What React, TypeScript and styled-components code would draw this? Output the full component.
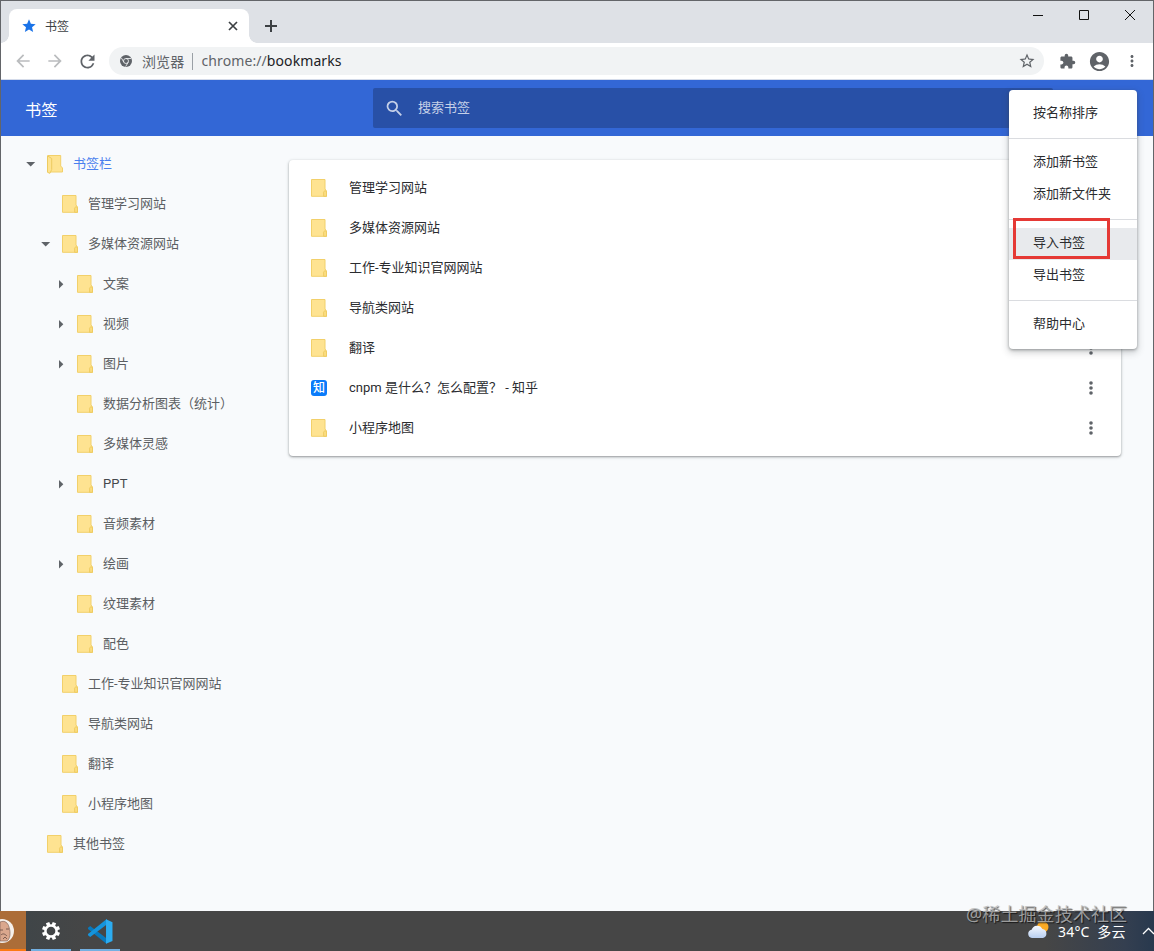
import React from "react";
import styled, { createGlobalStyle } from "styled-components";
import {
  MdAccountCircle,
  MdArrowBack,
  MdArrowForward,
  MdExtension,
  MdMoreVert,
  MdRefresh,
  MdSearch,
  MdStar,
  MdStarBorder,
} from "react-icons/md";

const GlobalStyle = createGlobalStyle`
  * { box-sizing: border-box; }
  html, body { margin: 0; padding: 0; overflow: hidden; }
  body { font-family: Roboto, "Noto Sans CJK SC", sans-serif; font-size: 13px; }
  svg { display: block; flex: none; }
`;

const Desktop = styled.div`
  position: relative;
  width: 1154px;
  height: 951px;
  display: flex;
  flex-direction: column;
  overflow: hidden;
`;

const BrowserWindow = styled.div`
  height: 911px;
  display: flex;
  flex-direction: column;
  border: 1px solid #636569;
  border-bottom: 0;
  background: #f8fafc;
`;

const TabStrip = styled.div`
  height: 42px;
  flex: none;
  display: flex;
  align-items: flex-end;
  padding-left: 8px;
  background: #dee1e6;
`;

const Tab = styled.div`
  position: relative;
  width: 240px;
  height: 34px;
  display: flex;
  align-items: center;
  padding: 0 10px 0 12px;
  border-radius: 8px 8px 0 0;
  background: #fff;
  color: #3c4043;
  font-size: 12px;
  &::before, &::after {
    content: "";
    position: absolute;
    bottom: 0;
    width: 8px;
    height: 8px;
  }
  &::before { left: -8px; background: radial-gradient(circle at 0 0, transparent 7.5px, #fff 8px); }
  &::after { right: -8px; background: radial-gradient(circle at 100% 0, transparent 7.5px, #fff 8px); }
`;

const TabTitle = styled.span`
  flex: 1;
  margin-left: 8px;
  padding-top: 1px;
  line-height: 18px;
`;

const NewTab = styled.div`
  display: flex;
  margin-left: 14px;
  padding-bottom: 9px;
`;

const WindowButtons = styled.div`
  margin-left: auto;
  height: 42px;
  display: flex;
  padding: 8px 17px 0 0;
  gap: 34px;
`;

const Toolbar = styled.div`
  height: 37px;
  flex: none;
  display: flex;
  align-items: center;
  padding: 0 12px;
  background: #fff;
  border-bottom: 1px solid #d4dbea;
  color: #5f6368;
`;

const NavIcons = styled.div`
  display: flex;
  align-items: center;
  width: 96px;
  gap: 12px;
`;

const AddressBar = styled.div`
  width: 936px;
  height: 28px;
  display: flex;
  align-items: center;
  padding: 0 8px 0 11px;
  border-radius: 14px;
  background: #f1f3f4;
  font-family: "Noto Sans", "Noto Sans CJK SC", sans-serif;
  font-size: 14px;
`;

const SiteName = styled.span`
  margin-left: 10px;
  padding-right: 7px;
  border-right: 1px solid #9aa0a6;
  line-height: 17px;
  letter-spacing: 0.2px;
`;

const Url = styled.span`
  flex: 1;
  margin-left: 9px;
  line-height: 20px;
  letter-spacing: 0.09px;
  b { font-weight: 400; color: #202124; }
`;

const ToolbarActions = styled.div`
  display: flex;
  align-items: center;
  margin-left: 15px;
  gap: 12px;
`;

const AppHeader = styled.header`
  position: relative;
  height: 56px;
  flex: none;
  display: flex;
  align-items: center;
  padding-left: 24px;
  background: #3367d6;
  color: #fff;
`;

const AppTitle = styled.h1`
  width: 348px;
  margin: 0;
  padding-top: 2px;
  font-size: 16.25px;
  font-weight: 400;
`;

const SearchBox = styled.div`
  width: 680px;
  height: 40px;
  display: flex;
  align-items: center;
  padding-left: 11px;
  gap: 13px;
  border-radius: 2px;
  background: #2850a7;
  color: #c5d0e8;
  line-height: 18px;
  span { padding-bottom: 1px; }
`;

const Menu = styled.div`
  position: absolute;
  z-index: 2;
  top: 10px;
  left: 1008px;
  width: 128px;
  padding: 8px 0;
  border-radius: 4px;
  background: #fff;
  color: #2b2c2f;
  box-shadow: 0 1px 3px rgba(60, 64, 67, 0.45), 0 3px 7px 1px rgba(60, 64, 67, 0.22);
`;

const MenuItem = styled.div<{ $active?: boolean }>`
  height: 32px;
  padding-left: 24px;
  line-height: 29px;
  white-space: nowrap;
  background: ${(p) => (p.$active ? "#e8eaed" : "transparent")};
`;

const MenuDivider = styled.div`
  height: 1px;
  margin: 8px 0;
  background: #dadce0;
`;

const Highlight = styled.div`
  position: absolute;
  top: 128px;
  left: 4px;
  width: 97px;
  height: 41px;
  border: 3px solid #e53935;
`;

const Main = styled.div`
  flex: 1;
  display: flex;
  min-height: 0;
`;

const Sidebar = styled.nav`
  width: 288px;
  padding-top: 8px;
`;

const TreeRow = styled.div<{ $level: number; $selected?: boolean }>`
  height: 40px;
  display: flex;
  align-items: center;
  padding-left: ${(p) => 23 + p.$level * 15}px;
  color: ${(p) => (p.$selected ? "#4a80ee" : "#5b5e62")};
`;

const ArrowSlot = styled.span`
  width: 12px;
  height: 12px;
  margin-right: 10px;
`;

const RowLabel = styled.span`
  line-height: 20px;
  padding-bottom: 1px;
  white-space: pre;
`;

const TreeLabel = styled(RowLabel)`
  margin-left: 9px;
`;

const LatinLabel = styled(TreeLabel)`
  color: #45484c;
  letter-spacing: 0.15px;
`;

const Card = styled.section`
  width: 832px;
  height: 296px;
  margin-top: 24px;
  padding: 8px 0;
  border-radius: 4px;
  background: #fff;
  box-shadow: 0 1px 2px rgba(60, 64, 67, 0.42), 0 1px 3px 1px rgba(60, 64, 67, 0.12);
`;

const CardRow = styled.div`
  height: 40px;
  display: flex;
  align-items: center;
  padding: 0 20px 0 21px;
  color: #2b2c2f;
`;

const CardLabel = styled(RowLabel)`
  flex: 1;
  margin-left: 21px;
`;

const ZhihuIcon = styled.span`
  width: 16px;
  height: 16px;
  margin: 0 1px;
  border-radius: 3px;
  background: #0a7bfa;
  color: #fff;
  font-size: 12px;
  font-weight: 500;
  line-height: 16px;
  text-align: center;
`;

const Taskbar = styled.footer`
  height: 40px;
  flex: none;
  display: flex;
  background: linear-gradient(90deg, #3d4549 0, #464646 90px, #464646 1045px, #343f50 1125px, #28394e 1154px);
`;

const TaskItem = styled.div<{ $width: number; $left?: number; $line: string; $fill?: string }>`
  width: ${(p) => p.$width}px;
  margin-left: ${(p) => p.$left ?? 0}px;
  display: flex;
  justify-content: center;
  padding-top: 8px;
  border-bottom: 2px solid ${(p) => p.$line};
  background: ${(p) => p.$fill ?? "transparent"};
`;

const Tray = styled.div`
  display: flex;
  align-items: center;
  margin-left: auto;
  color: #fff;
  font-family: "Noto Sans", "Noto Sans CJK SC", sans-serif;
  font-size: 14px;
`;

const Weather = styled.span`
  width: 84px;
  margin-left: 9px;
  letter-spacing: 0.2px;
  white-space: pre;
`;

const Watermark = styled.div`
  position: absolute;
  z-index: 3;
  left: 966px;
  top: 902px;
  color: rgba(185, 185, 185, 0.78);
  font-family: "Noto Sans", "Noto Sans CJK SC", sans-serif;
  font-size: 18px;
  line-height: 24px;
  letter-spacing: 0.1px;
  white-space: nowrap;
  text-shadow: 1px 1px 1px rgba(0, 0, 0, 0.65);
`;

const Folder = ({ open = false }: { open?: boolean }) => (
  <svg width="18" height="20" viewBox="0 0 18 20">
    {open ? (
      <>
        <path d="M2 1.5h12.7V12l1.8 2v4H2z" fill="#fee391" stroke="#f2d06a" strokeLinejoin="round" />
        <path d="M1.5 1.8l4.2 2.7v11l-1.8 3.8-2.4-1z" fill="#fee391" stroke="#edcb60" strokeLinejoin="round" />
      </>
    ) : (
      <>
        <path d="M1.5 1.5h13.5V11l1.5 2v5.3H1.5z" fill="#fee391" stroke="#f2d06a" strokeLinejoin="round" />
        <path d="M13.6 18.3v-4.1l1.3-1.7 1.6 1.4v4.4z" fill="#fbdc7e" stroke="#edcb60" strokeWidth=".9" />
      </>
    )}
  </svg>
);

const Arrow = ({ dir }: { dir: "down" | "right" }) => (
  <svg width="12" height="12" viewBox="0 0 12 12" fill="#5f6368">
    <path d={dir === "down" ? "M2.2 4h9L6.7 8.5z" : "M5 2l4.3 4.2L5 10.4z"} />
  </svg>
);

const Dots = () => (
  <svg width="20" height="20" viewBox="0 0 20 20" fill="#5f6368">
    <circle cx="10" cy="5" r="1.8" />
    <circle cx="10" cy="10" r="1.8" />
    <circle cx="10" cy="15" r="1.8" />
  </svg>
);

const ChromeIcon = () => (
  <svg width="12" height="12" viewBox="0 0 24 24">
    <circle cx="12" cy="12" r="12" fill="#5f6368" />
    <g fill="none" stroke="#f1f3f4" strokeWidth="1.7">
      <circle cx="12" cy="12" r="5" />
      <path d="M12 7h10M7.7 14.5l-5-8.7M16.3 14.5l-5 8.7" />
    </g>
  </svg>
);

const GearIcon = () => (
  <svg width="24" height="24" viewBox="0 0 24 24" fill="none" stroke="#fff">
    <circle cx="12" cy="12" r="5.6" strokeWidth="2.5" />
    {[0, 45, 90, 135, 180, 225, 270, 315].map((angle) => (
      <path key={angle} d="M12 3v3" strokeWidth="3.6" transform={`rotate(${angle + 22.5} 12 12)`} />
    ))}
  </svg>
);

const VsCodeIcon = () => (
  <svg width="25" height="25" viewBox="0 0 24 24">
    <path d="M0 8.3l2.1-1.6 15.9 12L18 24 0 9.5z" fill="#0879bd" />
    <path d="M0 15.5l2.1 1.7L18 5.3 18 0 0 14.3z" fill="#1594dc" />
    <path d="M17.3.2L23.5 3v18l-6.2 2.8z" fill="#2cacf0" />
  </svg>
);

const Avatar = () => (
  <svg width="26" height="26" viewBox="0 0 26 26">
    <circle cx="2" cy="12" r="12" fill="#f5f0eb" />
    <path d="M0 3c5-2 8 1 9 5 2 6 1 12-2 14H0z" fill="#daa78d" stroke="#74554a" strokeWidth=".6" />
    <path d="M0 11h3m3-1h3M1 16c2-2 4-1 6 1M3 20l2-2 2 2" fill="none" stroke="#654a42" strokeWidth=".8" />
  </svg>
);

const WeatherIcon = () => (
  <svg width="22" height="20" viewBox="0 0 22 20">
    <defs>
      <linearGradient id="cloud" x1="0" y1="0" x2="0" y2="1">
        <stop stopColor="#f7faff" />
        <stop offset="1" stopColor="#b8cef0" />
      </linearGradient>
    </defs>
    <circle cx="15.8" cy="6" r="5.7" fill="#fbaa24" />
    <path d="M5 17a4.2 4.2 0 0 1-.4-8.3A5.8 5.8 0 0 1 15.4 8 4.6 4.6 0 0 1 16 17z" fill="url(#cloud)" />
  </svg>
);

type TreeNode = { name: string; level: number; arrow?: "down" | "right"; selected?: boolean };

const tree: TreeNode[] = [
  { name: "书签栏", level: 0, arrow: "down", selected: true },
  { name: "管理学习网站", level: 1 },
  { name: "多媒体资源网站", level: 1, arrow: "down" },
  { name: "文案", level: 2, arrow: "right" },
  { name: "视频", level: 2, arrow: "right" },
  { name: "图片", level: 2, arrow: "right" },
  { name: "数据分析图表（统计）", level: 2 },
  { name: "多媒体灵感", level: 2 },
  { name: "PPT", level: 2, arrow: "right" },
  { name: "音频素材", level: 2 },
  { name: "绘画", level: 2, arrow: "right" },
  { name: "纹理素材", level: 2 },
  { name: "配色", level: 2 },
  { name: "工作-专业知识官网网站", level: 1 },
  { name: "导航类网站", level: 1 },
  { name: "翻译", level: 1 },
  { name: "小程序地图", level: 1 },
  { name: "其他书签", level: 0 },
];

const bookmarks = [
  "管理学习网站",
  "多媒体资源网站",
  "工作-专业知识官网网站",
  "导航类网站",
  "翻译",
  "cnpm 是什么？怎么配置？ - 知乎",
  "小程序地图",
];

export default function App() {
  return (
    <Desktop>
      <GlobalStyle />
      <BrowserWindow>
        <TabStrip>
          <Tab>
            <MdStar size={16} color="#1a73e8" />
            <TabTitle>书签</TabTitle>
            <svg width="12" height="12" viewBox="0 0 12 12" stroke="#3c4043" strokeWidth="1.7">
              <path d="M2 2l8 8M10 2l-8 8" />
            </svg>
          </Tab>
          <NewTab>
            <svg width="16" height="16" viewBox="0 0 16 16" stroke="#3c4043" strokeWidth="2">
              <path d="M8 2v12M2 8h12" />
            </svg>
          </NewTab>
          <WindowButtons>
            <svg width="12" height="12" viewBox="0 0 12 12" fill="none" stroke="#111">
              <path d="M1 6.5h10" />
            </svg>
            <svg width="12" height="12" viewBox="0 0 12 12" fill="none" stroke="#111">
              <path d="M1.5 1.5h9v9h-9z" />
            </svg>
            <svg width="12" height="12" viewBox="0 0 12 12" fill="none" stroke="#111">
              <path d="M1 1l10 10M11 1L1 11" />
            </svg>
          </WindowButtons>
        </TabStrip>
        <Toolbar>
          <NavIcons>
            <MdArrowBack size={20} color="#babcbe" />
            <MdArrowForward size={20} color="#babcbe" />
            <MdRefresh size={21} />
          </NavIcons>
          <AddressBar>
            <ChromeIcon />
            <SiteName>浏览器</SiteName>
            <Url>
              chrome://<b>bookmarks</b>
            </Url>
            <MdStarBorder size={18} />
          </AddressBar>
          <ToolbarActions>
            <MdExtension size={17} />
            <MdAccountCircle size={23} />
            <MdMoreVert size={18} />
          </ToolbarActions>
        </Toolbar>
        <AppHeader>
          <AppTitle>书签</AppTitle>
          <SearchBox>
            <MdSearch size={21} />
            <span>搜索书签</span>
          </SearchBox>
          <Menu>
            <MenuItem>按名称排序</MenuItem>
            <MenuDivider />
            <MenuItem>添加新书签</MenuItem>
            <MenuItem>添加新文件夹</MenuItem>
            <MenuDivider />
            <MenuItem $active>导入书签</MenuItem>
            <MenuItem>导出书签</MenuItem>
            <MenuDivider />
            <MenuItem>帮助中心</MenuItem>
            <Highlight />
          </Menu>
        </AppHeader>
        <Main>
          <Sidebar>
            {tree.map((node) => {
              const Label = node.name === "PPT" ? LatinLabel : TreeLabel;
              return (
                <TreeRow key={node.name} $level={node.level} $selected={node.selected}>
                  <ArrowSlot>{node.arrow && <Arrow dir={node.arrow} />}</ArrowSlot>
                  <Folder open={node.selected} />
                  <Label>{node.name}</Label>
                </TreeRow>
              );
            })}
          </Sidebar>
          <Card>
            {bookmarks.map((name) => (
              <CardRow key={name}>
                {name.startsWith("cnpm") ? <ZhihuIcon>知</ZhihuIcon> : <Folder />}
                <CardLabel>{name}</CardLabel>
                <Dots />
              </CardRow>
            ))}
          </Card>
        </Main>
      </BrowserWindow>
      <Taskbar>
        <TaskItem $width={26} $line="#fb7a13" $fill="#ac6d38">
          <Avatar />
        </TaskItem>
        <TaskItem $width={40} $left={5} $line="#73b0e2">
          <GearIcon />
        </TaskItem>
        <TaskItem $width={40} $left={9} $line="#73b0e2">
          <VsCodeIcon />
        </TaskItem>
        <Tray>
          <WeatherIcon />
          <Weather>34°C  多云</Weather>
          <svg width="12" height="12" viewBox="0 0 12 12" fill="none" stroke="#fff" strokeWidth="1.3">
            <path d="M1 9l5.5-5.5L12 9" />
          </svg>
        </Tray>
      </Taskbar>
      <Watermark>@稀土掘金技术社区</Watermark>
    </Desktop>
  );
}
